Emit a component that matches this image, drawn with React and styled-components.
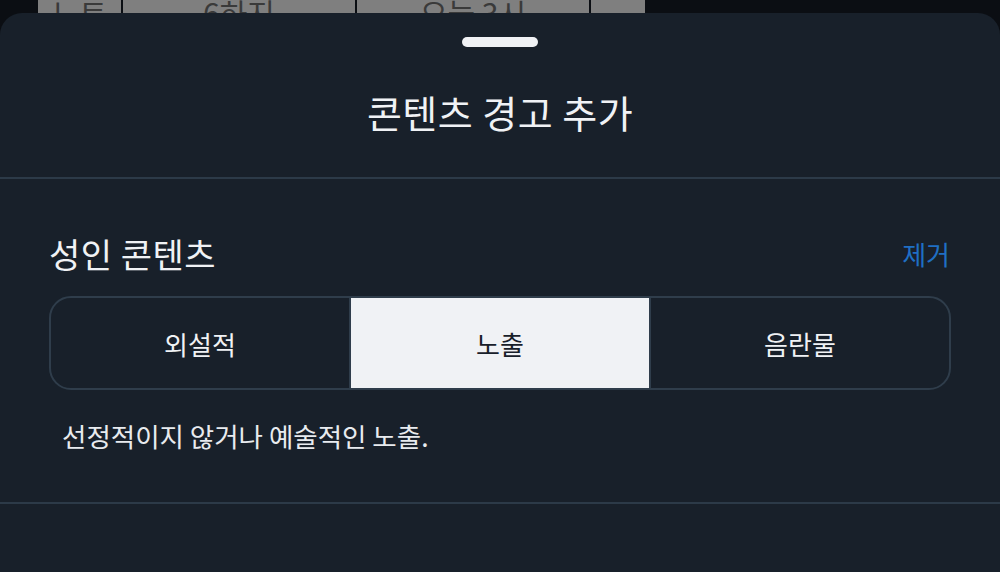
import styled, { createGlobalStyle } from 'styled-components';

const GlobalStyle = createGlobalStyle`
  html, body {
    margin: 0;
    padding: 0;
    background: #0b0e13;
    font-family: "Noto Sans CJK KR", "Noto Sans", sans-serif;
  }
`;

const Screen = styled.div`
  width: 1000px;
  height: 572px;
  overflow: hidden;
  display: flex;
  flex-direction: column;
  background: #0b0e13;
`;

const BehindRow = styled.div`
  height: 13px;
  flex: none;
  display: flex;
  padding-left: 38px;
  gap: 2px;
  overflow: hidden;
`;

const BehindCell = styled.div`
  width: ${(p) => p.$w}px;
  height: 13px;
  background: #7f7f7f;
  color: #3a3a3a;
  font-size: 30px;
  line-height: 1;
  display: flex;
  justify-content: center;
  align-items: flex-end;
  overflow: hidden;

  span {
    transform: translateY(14px);
  }
`;

const Sheet = styled.div`
  flex: 1;
  background: #18202a;
  border-radius: 22px 22px 0 0;
  display: flex;
  flex-direction: column;
`;

const Header = styled.header`
  height: 164px;
  display: flex;
  flex-direction: column;
  align-items: center;
  border-bottom: 2px solid #2c3a48;
`;

const Handle = styled.div`
  width: 76px;
  height: 10px;
  margin-top: 24px;
  border-radius: 5px;
  background: #f0f2f5;
`;

const Title = styled.h2`
  margin: 43px 0 0;
  font-size: 38px;
  line-height: 44px;
  font-weight: 400;
  letter-spacing: 0.5px;
  color: #f0f2f5;
`;

const Section = styled.section`
  padding: 53px 49px 0;
  height: 325px;
  box-sizing: border-box;
  display: flex;
  flex-direction: column;
  border-bottom: 2px solid #2c3a48;
`;

const SectionHead = styled.div`
  display: flex;
  justify-content: space-between;
  align-items: center;
  height: 42px;
`;

const SectionTitle = styled.h3`
  margin: 0;
  font-size: 34px;
  font-weight: 400;
  letter-spacing: 0.5px;
  color: #f0f2f5;
`;

const RemoveLink = styled.button`
  border: none;
  background: none;
  padding: 0 1px 0 0;
  font-family: inherit;
  font-size: 26px;
  color: #1f6fc4;
`;

const Segmented = styled.div`
  margin-top: 22px;
  height: 94px;
  box-sizing: border-box;
  border: 2px solid #2f3d4b;
  border-radius: 22px;
  display: grid;
  grid-template-columns: 298px 300px 1fr;
  overflow: hidden;
`;

const Segment = styled.button`
  border: none;
  border-left: ${(p) => (p.$first ? 'none' : '2px solid #2f3d4b')};
  background: ${(p) => (p.$active ? '#f0f2f5' : 'transparent')};
  color: ${(p) => (p.$active ? '#18202a' : '#f0f2f5')};
  font-family: inherit;
  font-size: 26px;
  padding: 0;
`;

const Description = styled.p`
  margin: 30px 0 0 13px;
  font-size: 26.5px;
  line-height: 32px;
  color: #e8ebef;
`;

const segments = ['외설적', '노출', '음란물'];

export default function App() {
  return (
    <Screen>
      <GlobalStyle />
      <BehindRow>
        <BehindCell $w={83}><span>노트</span></BehindCell>
        <BehindCell $w={232}><span>6하지</span></BehindCell>
        <BehindCell $w={232}><span>오늘 3시</span></BehindCell>
        <BehindCell $w={54} />
      </BehindRow>
      <Sheet>
        <Header>
          <Handle />
          <Title>콘텐츠 경고 추가</Title>
        </Header>
        <Section>
          <SectionHead>
            <SectionTitle>성인 콘텐츠</SectionTitle>
            <RemoveLink>제거</RemoveLink>
          </SectionHead>
          <Segmented>
            {segments.map((s, i) => (
              <Segment key={s} $first={i === 0} $active={i === 1}>
                {s}
              </Segment>
            ))}
          </Segmented>
          <Description>선정적이지 않거나 예술적인 노출.</Description>
        </Section>
      </Sheet>
    </Screen>
  );
}
